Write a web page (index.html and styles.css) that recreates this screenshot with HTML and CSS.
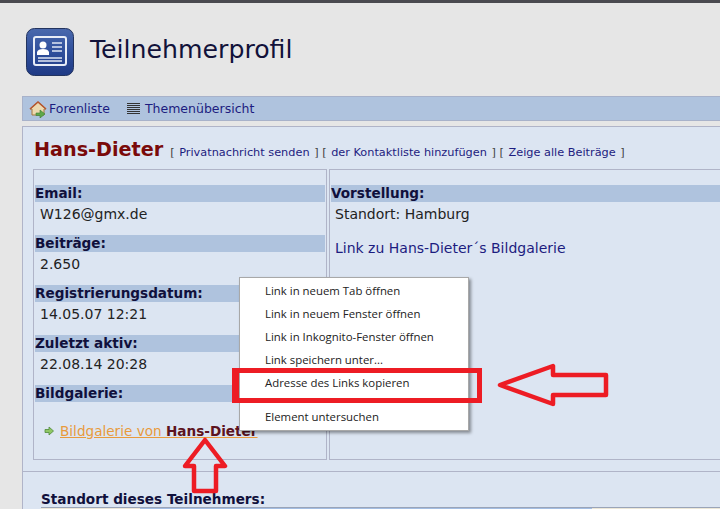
FILE: index.html
```html
<!DOCTYPE html>
<html lang="en">
<head>
  <meta charset="UTF-8" />
  <title>Teilnehmerprofil</title>
  <link rel="stylesheet" href="styles.css">
</head>
<body>
  <div class="topbar"></div>
  <div class="header">
    <svg class="logo" width="48" height="48" viewBox="0 0 48 48">
      <defs>
        <linearGradient id="logoBlue" x1="0" y1="0" x2="0" y2="1">
          <stop offset="0" stop-color="#4a69ad"/>
          <stop offset="0.5" stop-color="#2f4f9c"/>
          <stop offset="1" stop-color="#1f3a85"/>
        </linearGradient>
      </defs>
      <rect x="0.5" y="0.5" width="47" height="47" rx="8" fill="url(#logoBlue)" stroke="#23345f"/>
      <rect x="8" y="9" width="32" height="28" rx="2" fill="none" stroke="#e8edf7" stroke-width="2"/>
      <circle cx="17" cy="17" r="3.5" fill="#fff"/>
      <path d="M11 27 L11 24 Q12 21 17 21 Q22 21 23 24 L23 27 Z" fill="#fff"/>
      <path d="M26 15 H36 M26 19 H36 M26 23 H36 M12 30 H36 M12 33 H36" stroke="#dfe6f4" stroke-width="1.4"/>
    </svg>
    <h1>Teilnehmerprofil</h1>
  </div>
  <div class="nav">
    <svg width="18" height="18" viewBox="0 0 18 18">
      <path d="M1 9 L9 2 L17 9 L15 9 L15 15 L3 15 L3 9 Z" fill="#ecd9b0" stroke="#a5763f"/>
      <path d="M1 9 L9 2 L17 9" fill="none" stroke="#b5562e" stroke-width="1.6"/>
      <path d="M7 13 H11 V10 L16 14 L11 18 V15.5 H7 Z" fill="#5fa84a" stroke="#3d7d33" stroke-width="0.6"/>
    </svg>
    <a href="#">Forenliste</a>
    <svg class="list-icon" width="13" height="12" viewBox="0 0 13 12">
      <path d="M0 .5H13M0 2.5H13M0 4.5H13M0 6.5H13M0 8.5H13M0 10.5H13" stroke="#333" stroke-width="1"/>
    </svg>
    <a href="#">Themenübersicht</a>
  </div>
  <div class="profile">
    <div class="profile-head">
      <span class="name">Hans-Dieter</span>
      <span class="actions">[ <a href="#">Privatnachricht senden</a> ] [ <a href="#">der Kontaktliste hinzufügen</a> ] [ <a href="#">Zeige alle Beiträge</a> ]</span>
    </div>
    <div class="columns">
      <div class="col col-left">
        <h3>Email:</h3>
        <p>W126@gmx.de</p>
        <h3>Beiträge:</h3>
        <p>2.650</p>
        <h3>Registrierungsdatum:</h3>
        <p>14.05.07 12:21</p>
        <h3>Zuletzt aktiv:</h3>
        <p>22.08.14 20:28</p>
        <h3>Bildgalerie:</h3>
        <div class="gallery">
          <svg width="10" height="10" viewBox="0 0 10 10">
            <path d="M1 3.5 H5 V1 L9.5 5 L5 9 V6.5 H1 Z" fill="#8fc764" stroke="#4f8a3a" stroke-width="0.8"/>
          </svg>
          <a href="#">Bildgalerie von <b>Hans-Dieter</b></a>
        </div>
      </div>
      <div class="col col-right">
        <h3>Vorstellung:</h3>
        <p>Standort: Hamburg</p>
        <p class="intro-link"><a href="#">Link zu Hans-Dieter´s Bildgalerie</a></p>
      </div>
    </div>
    <div class="location">
      <h3>Standort dieses Teilnehmers:</h3>
      <div class="map">
        <div class="map-land map-land-left"></div>
        <div class="map-land map-land-right"></div>
      </div>
    </div>
  </div>

  <ul class="menu">
    <li>Link in neuem Tab öffnen</li>
    <li>Link in neuem Fenster öffnen</li>
    <li>Link in Inkognito-Fenster öffnen</li>
    <li>Link speichern unter...</li>
    <li>Adresse des Links kopieren</li>
    <li class="sep"></li>
    <li>Element untersuchen</li>
  </ul>
  <div class="highlight"></div>
  <svg class="arrow arrow-left" width="116" height="46" viewBox="0 0 116 46">
    <path d="M3 22 L56 3 L56 12 L109 12 L109 32 L56 32 L56 41 Z"/>
  </svg>
  <svg class="arrow arrow-up" width="48" height="58" viewBox="0 0 48 58">
    <path d="M23 3 L43 29 L34 29 L34 54 L12 54 L12 29 L3 29 Z"/>
  </svg>
</body>
</html>
```

FILE: styles.css
```css
html {
  overflow: hidden;
}

body {
  margin: 0;
  width: 720px;
  height: 509px;
  overflow: hidden;
  position: relative;
  background-color: #e6e6e6;
  font-family: "DejaVu Sans", sans-serif;
  color: #222;
}

a {
  color: #1c1c80;
  text-decoration: none;
}

.topbar {
  height: 3px;
  background-color: #4a4a50;
}

.header {
  display: flex;
  align-items: center;
  gap: 16px;
  padding: 25px 0 20px 26px;
}

.logo {
  flex-shrink: 0;
}

h1 {
  margin: 0;
  font-size: 25.2px;
  font-weight: 400;
  color: #12123a;
  position: relative;
  top: -3px;
}

.nav {
  display: flex;
  align-items: center;
  height: 23px;
  margin-left: 22px;
  padding-left: 6px;
  background-color: #afc3de;
  border: 1px solid #a8b2ca;
  border-right: none;
  font-size: 12.5px;
}

.nav a {
  margin-left: 2px;
}

.list-icon {
  margin-left: 17px;
  margin-right: 3px;
}

.profile {
  margin: 5px 0 0 22px;
  background-color: #dce5f2;
  border: 1px solid #b0b4c8;
  border-right: none;
  border-bottom: none;
}

.profile-head {
  display: flex;
  align-items: baseline;
  gap: 7px;
  height: 42px;
  padding-left: 11px;
  box-sizing: border-box;
  padding-top: 11px;
  white-space: nowrap;
}

.name {
  font-size: 19.2px;
  font-weight: 700;
  color: #7a0a0a;
}

.actions {
  font-size: 11.3px;
  color: #444;
}

.actions a {
  margin: 0 1px;
}

.columns {
  display: flex;
  gap: 2px;
  padding-left: 10px;
}

.col {
  border: 1px solid #b0b4c8;
  height: 291px;
  padding: 15px 1px 0;
  box-sizing: border-box;
}

.col-left {
  width: 294px;
}

.col-right {
  flex: 1;
  border-right: none;
  padding-right: 0;
}

h3 {
  margin: 0;
  height: 17px;
  line-height: 17px;
  font-size: 13.6px;
  font-weight: 700;
  color: #10103c;
  background-color: #afc3de;
}

.col p {
  margin: 0;
  height: 33px;
  line-height: 25px;
  padding-left: 4px;
  font-size: 14px;
}

.col-left p {
  padding-left: 5px;
}

.col .intro-link {
  margin-top: 1px;
}

.gallery {
  display: flex;
  align-items: center;
  gap: 6px;
  padding: 21px 0 0 9px;
  font-size: 13.6px;
}

.gallery a {
  color: #e89a3c;
  text-decoration: underline;
}

.gallery b {
  color: #5c1320;
}

.location {
  margin-top: 11px;
  border-top: 1px solid #b0b4c8;
  padding: 19px 0 0 18px;
}

.location h3 {
  background: none;
  height: 16px;
  line-height: 16px;
}

.map {
  display: flex;
  justify-content: space-between;
  height: 2px;
  background-color: #a3bde3;
  border-top: 1px solid #9aa4b8;
}

.map-land {
  height: 100%;
  background-color: #ece7d8;
}

.map-land-left {
  width: 99px;
}

.map-land-right {
  width: 128px;
}

.menu {
  position: absolute;
  left: 239px;
  top: 277px;
  width: 230px;
  height: 154px;
  margin: 0;
  padding: 2px 0 0;
  box-sizing: border-box;
  list-style: none;
  background-color: #fff;
  border: 1px solid #a8a8a8;
  box-shadow: 2px 2px 3px rgba(0, 0, 0, 0.4);
  font-family: "Open Sans", sans-serif;
  font-size: 11.4px;
  color: #222;
}

.menu li {
  height: 23px;
  line-height: 21px;
  padding-left: 25px;
}

.menu .sep {
  height: 11px;
}

.highlight {
  position: absolute;
  left: 232px;
  top: 368px;
  width: 250px;
  height: 35px;
  box-sizing: border-box;
  border: 5px solid #ed1c24;
  border-left-width: 7px;
}

.arrow {
  position: absolute;
}

.arrow path {
  fill: none;
  stroke: #ed1c24;
  stroke-width: 4.5;
  stroke-linejoin: round;
}

.arrow-left {
  left: 497px;
  top: 363px;
}

.arrow-up {
  left: 182px;
  top: 437px;
}
```
